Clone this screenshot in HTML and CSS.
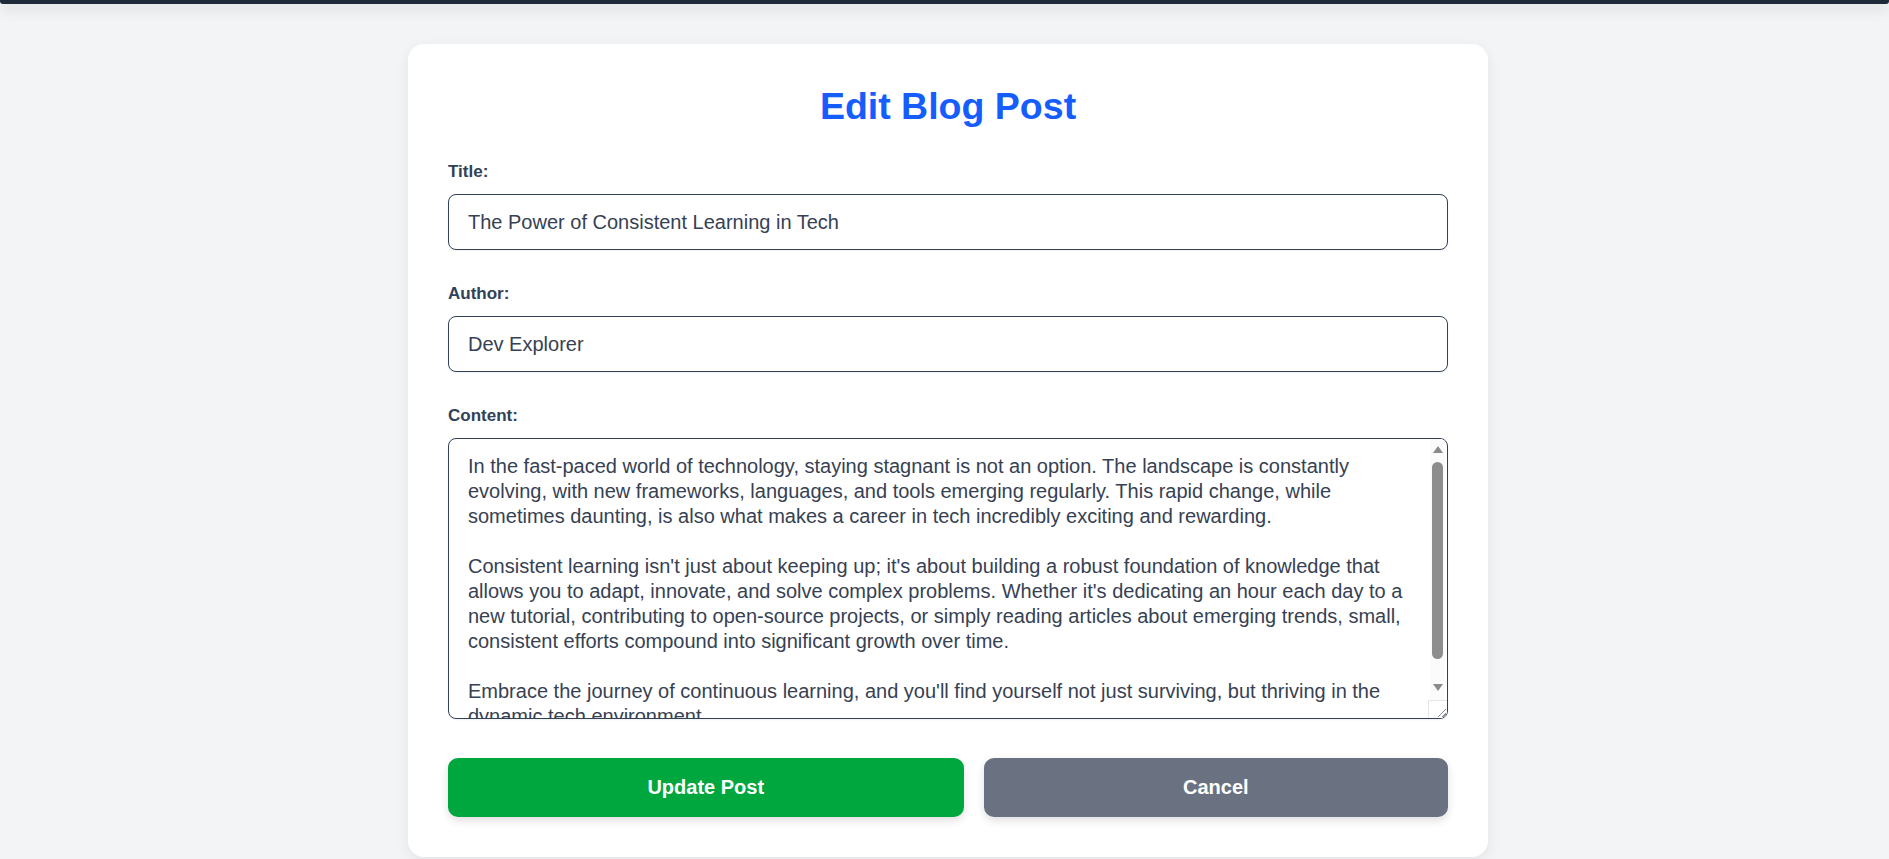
FILE: index.html
```html
<!DOCTYPE html>
<html lang="en">
<head>
<meta charset="utf-8">
<title>Edit Blog Post</title>
<link rel="stylesheet" href="styles.css">
</head>
<body>
<header class="topbar"></header>
<main class="page">
  <form class="card">
    <h2 class="card-title">Edit Blog Post</h2>
    <div class="form-group">
      <label class="field-label" for="title">Title:</label>
      <input class="field-input" id="title" type="text" value="The Power of Consistent Learning in Tech">
    </div>
    <div class="form-group">
      <label class="field-label" for="author">Author:</label>
      <input class="field-input" id="author" type="text" value="Dev Explorer">
    </div>
    <div class="form-group form-group-last">
      <label class="field-label" for="content">Content:</label>
      <div class="textarea-wrap">
        <textarea class="field-textarea" id="content">In the fast-paced world of technology, staying stagnant is not an option. The landscape is constantly evolving, with new frameworks, languages, and tools emerging regularly. This rapid change, while sometimes daunting, is also what makes a career in tech incredibly exciting and rewarding.

Consistent learning isn't just about keeping up; it's about building a robust foundation of knowledge that allows you to adapt, innovate, and solve complex problems. Whether it's dedicating an hour each day to a new tutorial, contributing to open-source projects, or simply reading articles about emerging trends, small, consistent efforts compound into significant growth over time.

Embrace the journey of continuous learning, and you'll find yourself not just surviving, but thriving in the dynamic tech environment.</textarea>
        <div class="scrollbar" aria-hidden="true">
          <span class="sb-arrow sb-arrow-up"></span>
          <span class="sb-thumb"></span>
          <span class="sb-arrow sb-arrow-down"></span>
          <span class="sb-corner"></span>
        </div>
      </div>
    </div>
    <div class="actions">
      <button class="btn btn-primary" type="button">Update Post</button>
      <button class="btn btn-secondary" type="button">Cancel</button>
    </div>
  </form>
</main>
</body>
</html>
```
FILE: styles.css
```css
* {
  box-sizing: border-box;
}

html, body {
  margin: 0;
  padding: 0;
  height: 100%;
  overflow: hidden;
}

body {
  background: #f3f4f6;
  font-family: "Liberation Sans", Arial, sans-serif;
  color: #364153;
}

.topbar {
  height: 4px;
  background: #1e2939;
  box-shadow: 0 4px 14px rgba(0, 0, 0, 0.2);
  border-bottom-left-radius: 3px;
  border-bottom-right-radius: 3px;
  position: relative;
  z-index: 2;
}

.page {
  display: flex;
  justify-content: center;
  padding: 40px 0 0 7px;
}

.card {
  width: 1080px;
  background: #ffffff;
  border-radius: 16px;
  padding: 40px;
  box-shadow: 0 4px 14px rgba(0, 0, 0, 0.07);
}

.card-title {
  margin: 0 0 33px;
  font-size: 37.5px;
  line-height: 45px;
  font-weight: 700;
  color: #155dfc;
  text-align: center;
}

.form-group {
  margin-bottom: 34px;
}

.form-group-last {
  margin-bottom: 39px;
}

.field-label {
  display: block;
  font-size: 17px;
  line-height: 20px;
  font-weight: 700;
  color: #314158;
  margin-bottom: 12px;
}

.field-input,
.field-textarea {
  display: block;
  width: 100%;
  font-family: "Liberation Sans", Arial, sans-serif;
  font-size: 20px;
  color: #364153;
  background: #ffffff;
  border: 1px solid #314158;
  border-radius: 8px;
  box-shadow: 0 1px 2px rgba(0, 0, 0, 0.06);
  outline: none;
}

.field-input {
  height: 56px;
  padding: 0 19px;
}

.textarea-wrap {
  position: relative;
}

.field-textarea {
  height: 281px;
  padding: 15px 34px 15px 19px;
  line-height: 25px;
  resize: none;
  overflow: hidden;
}

.scrollbar {
  position: absolute;
  top: 1px;
  right: 1px;
  bottom: 1px;
  width: 19px;
  display: flex;
  flex-direction: column;
  align-items: center;
  padding-top: 7px;
  background: linear-gradient(to right, transparent 2px, #fbfbfb 2px, #fbfbfb 17px, transparent 17px);
  border-top-right-radius: 7px;
  border-bottom-right-radius: 7px;
  pointer-events: none;
}

.sb-arrow {
  width: 0;
  height: 0;
  border-left: 5.5px solid transparent;
  border-right: 5.5px solid transparent;
}

.sb-arrow-up {
  border-bottom: 7px solid #8a8a8a;
}

.sb-thumb {
  width: 11px;
  height: 197px;
  margin-top: 9px;
  border-radius: 6px;
  background: #8d8d8d;
}

.sb-arrow-down {
  margin-top: 25px;
  border-top: 7px solid #8a8a8a;
}

.sb-corner {
  margin-top: auto;
  width: 19px;
  height: 18px;
  border-top: 1px solid #e6e6e6;
  border-left: 1px solid #e6e6e6;
  background-color: #ffffff;
  background-image: linear-gradient(135deg, transparent 52%, #8a8a8a 52%, #8a8a8a 60%, transparent 60%, transparent 76%, #8a8a8a 76%, #8a8a8a 84%, transparent 84%);
  background-size: 9px 9px;
  background-position: right 1px bottom 1px;
  background-repeat: no-repeat;
  border-bottom-right-radius: 7px;
}

.actions {
  display: flex;
  gap: 20px;
}

.btn {
  flex: 1 1 auto;
  border: none;
  border-radius: 10px;
  padding: 18px 20px;
  font-family: "Liberation Sans", Arial, sans-serif;
  font-size: 20px;
  line-height: 23px;
  font-weight: 700;
  color: #ffffff;
  box-shadow: 0 4px 8px rgba(0, 0, 0, 0.12);
  cursor: pointer;
}

.btn-primary {
  background: #00a63e;
}

.btn-secondary {
  background: #6a7282;
}
```
